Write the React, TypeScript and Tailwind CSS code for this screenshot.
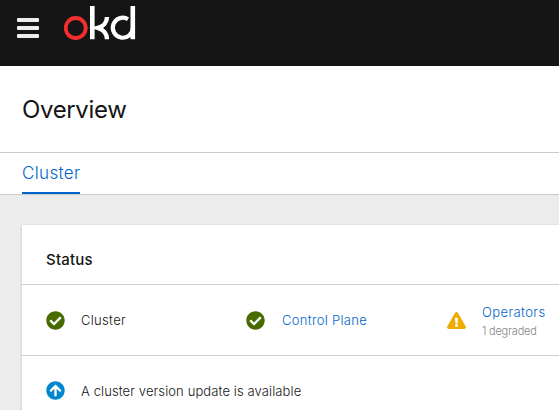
import React from "react";
import { FaCheckCircle, FaExclamationTriangle, FaArrowCircleUp } from "react-icons/fa";

function Logo() {
  return (
    <svg className="h-[36px] w-[72px]" viewBox="0 0 72 36" fill="none" aria-label="okd">
      <circle cx="11.7" cy="22" r="10" stroke="#f32f2e" strokeWidth="3.8" />
      <path d="M28.300 0v33.300M68.800 0v33.300" stroke="#fff" strokeWidth="4.600" />
      <path d="M43 11c0 5-3.500 9.500-9.200 10.900 5.700 1.600 9.200 6.100 9.200 11.400" stroke="#fff" strokeWidth="4.400" />
      <path d="M64 13.200a10 10 0 1 0 4.800 8.800" stroke="#fff" strokeWidth="4.200" />
    </svg>
  );
}

export default function App() {
  return (
    <div className="h-[410px] w-full overflow-hidden bg-[#ececec] font-['Inter',sans-serif] text-[#151515]">
      <header className="flex h-[66px] items-start bg-[#151515]">
        <button className="mt-[18px] ml-[17px] flex w-[22px] flex-col gap-1" aria-label="Menu">
          <span className="h-1 w-full rounded-[1px] bg-[#ededed]" />
          <span className="h-1 w-full rounded-[1px] bg-[#ededed]" />
          <span className="h-1 w-full rounded-[1px] bg-[#ededed]" />
        </button>
        <div className="mt-[6px] ml-[25px]">
          <Logo />
        </div>
      </header>
      <div className="flex h-[87px] items-center border-b border-[#cacaca] bg-white pl-[22px]">
        <h1 className="pt-[2px] text-[24px] leading-8 tracking-[-0.35px]">Overview</h1>
      </div>
      <nav className="flex h-[42px] border-b border-[#cacaca] bg-white pl-[22px]">
        <a className="h-[41px] w-[58px] border-b-2 border-[#0066cc] pt-[6px] text-[17px] leading-7 font-light tracking-[0.350px] text-[#0066cc]">Cluster</a>
      </nav>
      <main className="pt-[30px] pl-[22px]">
        <section className="h-[200px] bg-white shadow-[0_1px_3px_rgba(0,0,0,0.2)]">
          <div className="flex h-[60px] items-center border-b border-[#cfcfcf] pt-[10px] pl-6">
            <h2 className="text-[15px] leading-6 font-medium tracking-[0.2px]">Status</h2>
          </div>
          <div className="flex h-[71px] items-center border-b border-[#cfcfcf] pl-6 text-[13px] leading-5 font-light tracking-[0.300px]">
            <div className="flex w-[200px] items-center">
              <FaCheckCircle className="mr-[16px] size-[19px] text-[#486b00]" />
              <span>Cluster</span>
            </div>
            <div className="flex w-[201px] items-center">
              <FaCheckCircle className="mr-[17px] size-[19px] text-[#486b00]" />
              <a className="text-[#0066cc]">Control Plane</a>
            </div>
            <div className="flex items-center">
              <FaExclamationTriangle className="mr-[16px] size-[19px] text-[#f0ab00]" />
              <div className="flex flex-col pt-[2px]">
                <a className="tracking-[0.400px] text-[#0066cc]">Operators</a>
                <span className="pt-px text-[11px] leading-[17px] tracking-[-0.200px] text-[#888]">1 degraded</span>
              </div>
            </div>
          </div>
          <div className="flex items-center pt-[24px] pl-6 text-[13px] leading-5 font-light tracking-[0.110px]">
            <FaArrowCircleUp className="mr-[16px] size-[19px] text-[#0088ce]" />
            <span className="pt-px">A cluster version update is available</span>
          </div>
        </section>
      </main>
    </div>
  );
}
